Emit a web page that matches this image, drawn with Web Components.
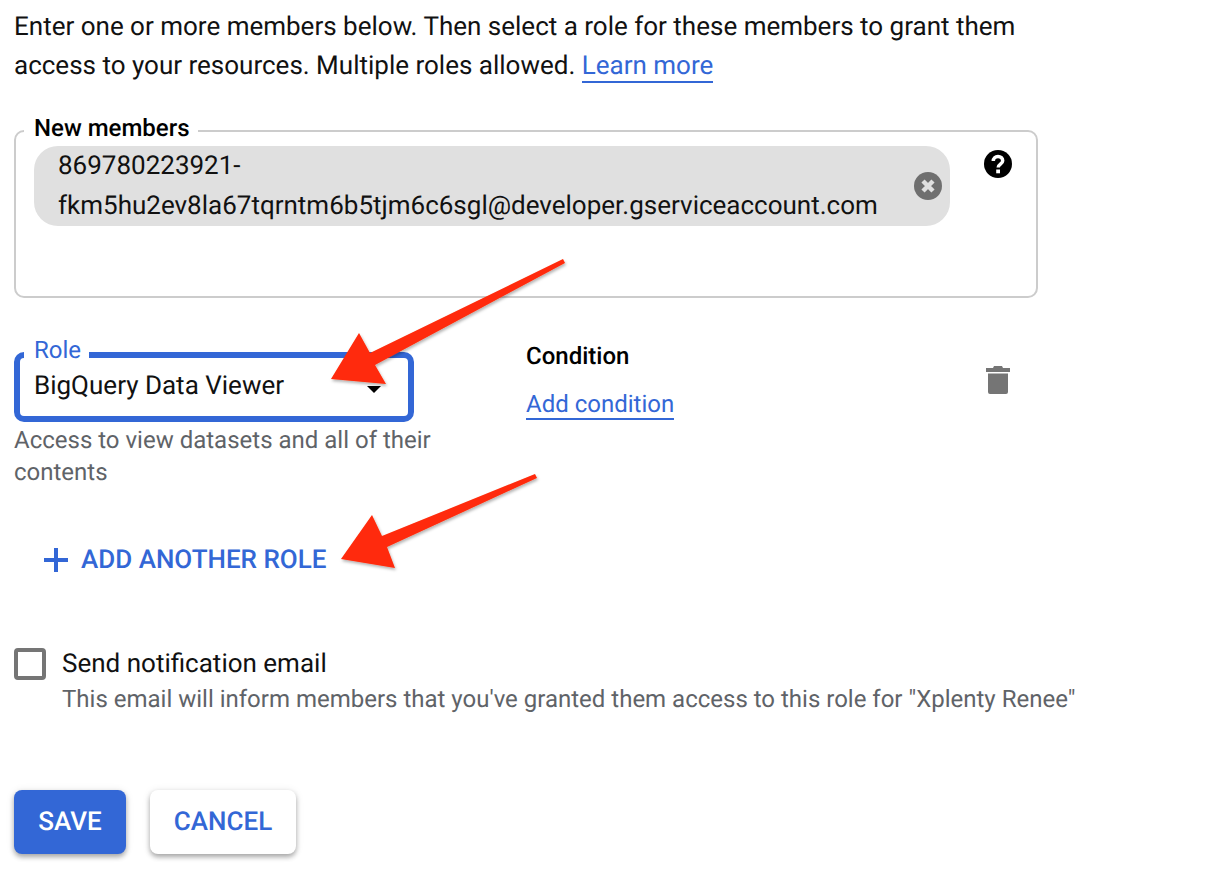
<!DOCTYPE html>
<html>
<head>
<meta charset="utf-8">
<style>
  html, body { margin: 0; background: #fff; }
  body { font-family: Roboto, "Liberation Sans", sans-serif; width: 1230px; height: 892px; overflow: hidden; position: relative; text-rendering: geometricPrecision; }
</style>
</head>
<body>
<member-form></member-form>
<script>
const BLUE = '#3367d6';

class OutlineField extends HTMLElement {
    constructor() {
        super();
        this.attachShadow({ mode: 'open' });
        this.shadowRoot.innerHTML = `
            <style>
                :host { display: block; position: relative; box-sizing: border-box; border: 2px solid #ccc; border-radius: 10px; }
                :host([focused]) { border: 6px solid ${BLUE}; }
                .label { position: absolute; left: 8px; top: -17px; padding: 0 8px 0 10px; background: #fff; font-size: 24px; line-height: 26px; font-weight: 500; color: #000; }
                :host([focused]) .label { left: 4px; top: -21px; font-weight: 400; color: ${BLUE}; }
            </style>
            <span class="label"></span>
            <slot></slot>
        `;
    }
    connectedCallback() {
        this.shadowRoot.querySelector('.label').textContent = this.getAttribute('label');
    }
}

class MemberChip extends HTMLElement {
    constructor() {
        super();
        this.attachShadow({ mode: 'open' });
        this.shadowRoot.innerHTML = `
            <style>
                :host { display: flex; align-items: center; justify-content: space-between; box-sizing: border-box; width: 916px; height: 80px; padding: 0 8px 0 24px; border-radius: 24px; background: #e0e0e0; color: #111; font-size: 26px; line-height: 40px; white-space: nowrap; }
                svg { display: block; width: 28px; height: 28px; }
            </style>
            <div><slot></slot></div>
            <svg viewBox="0 0 28 28"><circle cx="14" cy="14" r="14" fill="#6f6f6f"/><path d="M9 9l10 10M19 9L9 19" stroke="#e0e0e0" stroke-width="4.500"/></svg>
        `;
    }
}

class MemberForm extends HTMLElement {
    constructor() {
        super();
        this.attachShadow({ mode: 'open' });
        this.shadowRoot.innerHTML = `
            <style>
                :host { display: block; box-sizing: border-box; width: 1230px; height: 892px; padding: 8px 0 0 14px; color: #111; font-size: 26px; }
                a { color: ${BLUE}; text-decoration: none; border-bottom: 2px solid ${BLUE}; }
                .intro { line-height: 39px; height: 78px; margin-bottom: 44px; width: 1040px; }
                .members { width: 1024px; height: 168px; }
                .members-in { display: flex; align-items: flex-start; padding: 14px 0 0 18px; }
                .help { width: 28px; height: 28px; margin: 4px 0 0 34px; display: block; }
                .role-row { display: flex; align-items: flex-start; margin-top: 54px; height: 134px; }
                .role-col { width: 512px; flex: none; }
                .role { width: 400px; height: 70px; }
                .role-in { display: flex; align-items: center; justify-content: space-between; padding: 0 27px 0 14px; height: 56px; color: #111; line-height: 30px; }
                .caret { width: 0; height: 0; border: 7px solid transparent; border-top: 7px solid #000; border-bottom: 0; margin-top: 6px; }
                .hint { font-size: 24px; line-height: 32px; color: #5f6368; margin-top: 2px; }
                .cond { width: 460px; flex: none; }
                .cond-title { font-size: 24px; font-weight: 500; color: #000; line-height: 30px; margin-top: -11px; }
                .cond-link { display: inline-block; margin-top: 19px; font-size: 24px; line-height: 28px; }
                .trash { width: 24px; height: 28px; display: block; margin-top: 14px; }
                .add-role { display: flex; align-items: center; margin: 56px 0 0 30px; height: 36px; color: ${BLUE}; font-weight: 500; }
                .add-role svg { width: 24px; height: 24px; margin-right: 13px; }
                .notify { display: flex; margin-top: 70px; }
                .box { box-sizing: border-box; width: 32px; height: 32px; border: 4px solid #757575; border-radius: 4px; flex: none; margin-right: 16px; }
                .notify-title { line-height: 32px; }
                .notify-sub { font-size: 24px; line-height: 32px; color: #5f6368; margin-top: 3px; white-space: nowrap; }
                .actions { display: flex; gap: 24px; margin-top: 75px; }
                .btn { box-sizing: border-box; height: 64px; border-radius: 8px; display: flex; align-items: center; justify-content: center; font-weight: 500; box-shadow: 0 3px 5px rgba(0,0,0,.3), 0 1px 8px rgba(0,0,0,.1); }
                .save { width: 112px; background: ${BLUE}; color: #fff; }
                .cancel { width: 146px; background: #fff; color: ${BLUE}; }
                .arrows { position: absolute; left: 0; top: 0; width: 1230px; height: 892px; pointer-events: none; }
            </style>
            <div class="intro">Enter one or more members below. Then select a role for these members to grant them<br>access to your resources. Multiple roles allowed. <a>Learn more</a></div>
            <outline-field class="members" label="New members">
                <div class="members-in">
                    <member-chip>869780223921-<br>fkm5hu2ev8la67tqrntm6b5tjm6c6sgl@developer.gserviceaccount.com</member-chip>
                    <svg class="help" viewBox="0 0 28 28"><circle cx="14" cy="14" r="14" fill="#000"/><path d="M9.300 11c0-2.800 2-4.600 4.700-4.600s4.700 1.800 4.700 4.300c0 3.300-4.500 3.500-4.500 6.700" fill="none" stroke="#fff" stroke-width="3.500"/><rect x="12.200" y="19.500" width="3.800" height="3.800" fill="#fff"/></svg>
                </div>
            </outline-field>
            <div class="role-row">
                <div class="role-col">
                    <outline-field class="role" label="Role" focused>
                        <div class="role-in"><span>BigQuery Data Viewer</span><span class="caret"></span></div>
                    </outline-field>
                    <div class="hint">Access to view datasets and all of their<br>contents</div>
                </div>
                <div class="cond">
                    <div class="cond-title">Condition</div>
                    <a class="cond-link">Add condition</a>
                </div>
                <svg class="trash" viewBox="0 0 24 28"><path d="M2 7.500h20V26a2 2 0 0 1-2 2H4a2 2 0 0 1-2-2zM0 2h7l1-2h8l1 2h7v4H0z" fill="#757575"/></svg>
            </div>
            <div class="add-role"><svg viewBox="0 0 24 24"><path d="M12 0v24M0 12h24" stroke="${BLUE}" stroke-width="4"/></svg><span>ADD ANOTHER ROLE</span></div>
            <div class="notify">
                <div class="box"></div>
                <div>
                    <div class="notify-title">Send notification email</div>
                    <div class="notify-sub">This email will inform members that you've granted them access to this role for "Xplenty Renee"</div>
                </div>
            </div>
            <div class="actions"><div class="btn save">SAVE</div><div class="btn cancel">CANCEL</div></div>
            <svg class="arrows" viewBox="0 0 1230 892">
                <defs><filter id="s" x="-10%" y="-10%" width="120%" height="120%"><feDropShadow dx="1" dy="2" stdDeviation="1.500" flood-color="#000" flood-opacity=".3"/></filter></defs>
                <path filter="url(#s)" fill="#ff2a08" d="M563 259L565 263L375 365L386 384L331 379L359 333L370 353Z"/>
                <path filter="url(#s)" fill="#ff2a08" d="M535 474L537 478L387 547L395 568L341 559L372 515L382 536Z"/>
            </svg>
        `;
    }
}

customElements.define('outline-field', OutlineField);
customElements.define('member-chip', MemberChip);
customElements.define('member-form', MemberForm);
</script>
</body>
</html>
